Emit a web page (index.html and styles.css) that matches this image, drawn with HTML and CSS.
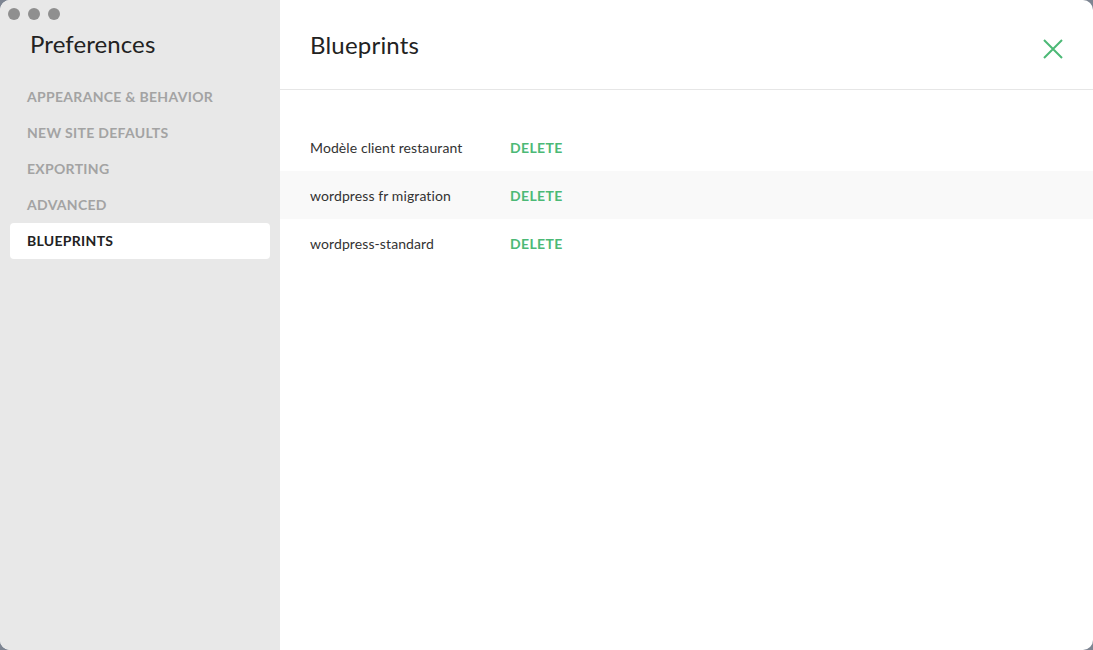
FILE: index.html
```html
<!doctype html>
<html>
<head>
<meta charset="utf-8">
<title>Preferences</title>
<link rel="stylesheet" href="styles.css">
</head>
<body>
	<div class="window">
		<div class="sidebar">
			<div class="lights"><i></i><i></i><i></i></div>
			<h1 class="sideTitle">Preferences</h1>
			<ul class="nav">
				<li>Appearance &amp; Behavior</li>
				<li>New Site Defaults</li>
				<li>Exporting</li>
				<li>Advanced</li>
				<li class="active">Blueprints</li>
			</ul>
		</div>
		<div class="main">
			<div class="head">
				<h2 class="title">Blueprints</h2>
				<a href="javascript:;" class="close">
					<svg width="20" height="20" viewBox="0 0 20 20"><path d="M1 1L19 19M19 1L1 19" stroke="#4cb976" stroke-width="2" fill="none"/></svg>
				</a>
			</div>
			<div class="list">
				<div class="row"><span class="name">Modèle client restaurant</span><a href="javascript:;" class="del">Delete</a></div>
				<div class="row odd"><span class="name">wordpress fr migration</span><a href="javascript:;" class="del">Delete</a></div>
				<div class="row"><span class="name">wordpress-standard</span><a href="javascript:;" class="del">Delete</a></div>
			</div>
		</div>
	</div>
</body>
</html>
```
FILE: styles.css
```css
html{ background:#7d8592;}
body{ margin:0; font-family:Lato,"Noto Sans",sans-serif; -webkit-font-smoothing:antialiased;}
.window{ display:flex; width:1093px; height:650px; border-radius:10px; overflow:hidden; background:#fff;}
.sidebar{ width:280px; flex:none; background:#e8e8e8; padding:8px 10px 0; box-sizing:border-box;}
.lights{ display:flex; gap:8px; margin-left:-2px;}
.lights i{ width:12px; height:12px; border-radius:50%; background:#8f8f8f;}
.sideTitle{ margin:9px 0 0 20px; font-size:24px; font-weight:400; color:#222; line-height:30px; letter-spacing:0.1px;}
.nav{ list-style:none; margin:20px 0 0; padding:0;}
.nav li{ height:36px; line-height:36px; padding-left:17px; font-size:14px; font-weight:700; letter-spacing:0.3px; text-transform:uppercase; color:#a3a3a3; border-radius:4px;}
.nav li.active{ background:#fff; color:#222;}
.main{ flex:1; display:flex; flex-direction:column;}
.head{ height:89px; border-bottom:1px solid #e6e6e6; display:flex; align-items:center; justify-content:space-between; padding:0 30px; box-sizing:content-box;}
.title{ margin:0 0 1px; font-size:24px; font-weight:400; color:#222; letter-spacing:0.2px;}
.close{ display:flex; margin-top:8px;}
.list{ padding-top:33px;}
.row{ height:48px; display:flex; align-items:center; padding-left:30px;}
.row.odd{ background:#f9f9f9;}
.name{ width:200px; font-size:14px; color:#333; letter-spacing:0.1px;}
.del{ font-size:14px; font-weight:700; letter-spacing:0.35px; text-transform:uppercase; color:#4cb976; text-decoration:none;}
```
